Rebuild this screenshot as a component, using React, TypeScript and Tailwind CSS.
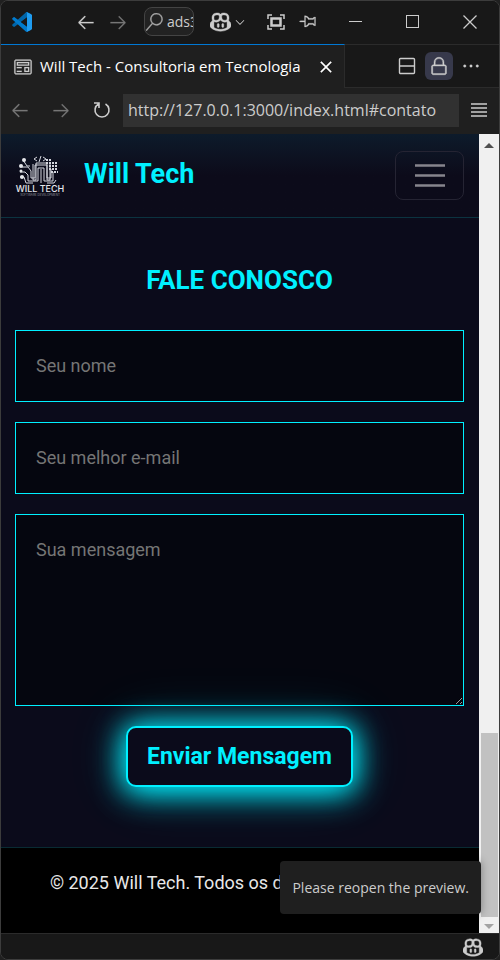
import type { ReactNode } from "react";
import {
  VscArrowLeft,
  VscArrowRight,
  VscChevronDown,
  VscClose,
  VscCopilot,
  VscEllipsis,
  VscLock,
  VscPinned,
  VscPreview,
  VscSearch,
} from "react-icons/vsc";

function IconButton({ label, className = "", children }: { label: string; className?: string; children: ReactNode }) {
  return (
    <button type="button" aria-label={label} className={`flex shrink-0 items-center justify-center ${className}`}>
      {children}
    </button>
  );
}

function VsCodeLogo() {
  return (
    <svg viewBox="0 0 100 100" className="size-5 shrink-0" aria-hidden="true">
      <path d="M96 11 76 1c-3-1-5-1-7 1L2 63c-2 2-2 4 0 6l6 5c1 1 3 1 5 0L94 13c2-2 2-2 2-2Z" fill="#0065a9" />
      <path d="M96 89 76 99c-3 1-5 1-7-1L2 37c-2-2-2-4 0-6l6-5c1-1 3-1 5 0l81 61c2 2 2 2 2 2Z" fill="#007acc" />
      <path d="M76 99c-3 1-5 1-7-1 3 3 6 1 6-2V4c0-3-3-5-6-2 2-2 4-2 7-1l20 10c3 1 4 3 4 5v68c0 2-1 4-4 5Z" fill="#1f9cf0" />
      <path d="M75 27v46L45 50Z" fill="#181818" />
    </svg>
  );
}

function TitleBar() {
  return (
    <header className="flex h-[43px] shrink-0 items-center bg-[#181818] pb-[2px] pl-[11px] pr-[22px] text-[#cccccc]">
      <VsCodeLogo />
      <IconButton label="Voltar" className="ml-[44px]"><VscArrowLeft size={20} strokeWidth={0.2} /></IconButton>
      <IconButton label="Avançar" className="ml-3 text-[#777777]"><VscArrowRight size={20} strokeWidth={0.2} /></IconButton>
      <button type="button" className="ml-4 flex h-[29px] w-[50px] shrink-0 items-center gap-1 overflow-hidden rounded-lg border border-[#444444] bg-[#222222] text-[#a8a8a8]">
        <VscSearch size={18} strokeWidth={0.4} className="shrink-0" />
        <span className="text-sm text-[#cccccc]">ads3</span>
      </button>
      <IconButton label="Copilot" className="ml-4"><VscCopilot size={21} strokeWidth={0.3} /></IconButton>
      <IconButton label="Menu do Copilot" className="ml-[2px]"><VscChevronDown size={14} /></IconButton>
      <div className="ml-[19px] flex flex-1 items-center">
        <IconButton label="Tela compacta">
          <svg width="20" height="20" fill="none" stroke="currentColor" strokeWidth="1.500">
            <path d="M2 7V3h4M14 3h4v4M18 13v4h-4M6 17H2v-4" />
            <rect x="5.500" y="6.500" width="9" height="7" strokeWidth="2.500" />
          </svg>
        </IconButton>
        <IconButton label="Fixar janela" className="ml-3"><VscPinned size={20} strokeWidth={0.2} className="rotate-90" /></IconButton>
      </div>
      <div className="flex items-center gap-[43px]">
        <IconButton label="Minimizar">
          <svg width="14" height="14" stroke="currentColor" fill="none"><path d="M0 6.5h13" /></svg>
        </IconButton>
        <IconButton label="Maximizar">
          <svg width="14" height="14" stroke="currentColor" fill="none"><rect x=".5" y=".5" width="12" height="12" /></svg>
        </IconButton>
        <IconButton label="Fechar">
          <svg width="14" height="14" stroke="currentColor" strokeWidth="1.300" fill="none"><path d="m.5.5 13 13M13.500.5l-13 13" /></svg>
        </IconButton>
      </div>
    </header>
  );
}

function TabBar() {
  return (
    <div className="flex h-11 shrink-0 border-t border-[#2b2b2b] bg-[#181818] text-[#cccccc]">
      <div className="-mt-px flex items-center border-r border-t border-r-[#2b2b2b] border-t-[#0078d4] bg-[#1f1f1f] pl-3 pr-2">
        <VscPreview size={20} strokeWidth={0.1} className="shrink-0" />
        <span className="ml-[7px] whitespace-nowrap text-[15px] text-white">Will Tech - Consultoria em Tecnologia</span>
        <IconButton label="Fechar aba" className="ml-[15px] text-white"><VscClose size={20} strokeWidth={0.4} /></IconButton>
      </div>
      <div className="flex flex-1 items-center justify-end gap-2 border-b border-[#2b2b2b] pr-[18px]">
        <IconButton label="Dividir editor">
          <svg width="20" height="20" fill="none" stroke="currentColor" strokeWidth="1.400">
            <rect x="2.500" y="2.500" width="15" height="15" rx="1" /><path d="M2 10h16" />
          </svg>
        </IconButton>
        <IconButton label="Bloquear grupo" className="size-7 rounded-md bg-[#37394b]"><VscLock size={20} strokeWidth={0.3} /></IconButton>
        <IconButton label="Mais ações"><VscEllipsis size={20} strokeWidth={0.3} /></IconButton>
      </div>
    </div>
  );
}

function AddressBar() {
  return (
    <div className="flex h-[46px] shrink-0 items-center bg-[#1f1f1f] pb-[2px] pl-[9px] pr-3 text-[#cccccc]">
      <IconButton label="Página anterior" className="text-[#777777]"><VscArrowLeft size={20} strokeWidth={0.2} /></IconButton>
      <IconButton label="Próxima página" className="ml-[21px] text-[#777777]"><VscArrowRight size={20} strokeWidth={0.2} /></IconButton>
      <IconButton label="Recarregar" className="ml-[22px]">
        <svg width="18" height="18" viewBox="0 0 18 18" fill="none" stroke="currentColor" strokeWidth="1.600">
          <path d="M12.500 3A7 7 0 1 1 5.500 3M1 2h5v5" />
        </svg>
      </IconButton>
      <input
        aria-label="Endereço"
        defaultValue="http://127.0.0.1:3000/index.html#contato"
        className="ml-3 h-[33px] min-w-0 flex-1 bg-[#313131] px-[5px] text-base text-[#cccccc] outline-none"
      />
      <IconButton label="Menu" className="ml-3">
        <svg width="16" height="14" stroke="currentColor" strokeWidth="1.500"><path d="M0 1h16M0 5h16M0 9h16M0 13h16" /></svg>
      </IconButton>
    </div>
  );
}

function WillTechLogo() {
  return (
    <svg viewBox="0 0 50 50" className="size-[50px] shrink-0" aria-label="Will Tech" role="img">
      <g fill="none" stroke="#d5d7df" strokeWidth="1">
        <path d="M7 16h6l3 4v7h4V14h12v13h4v-9" />
        <path d="M5 21h5l3 3v6h10V17h6v13h9v-9" />
        <path d="M5 26h4l2 6h7M15 15h-3l-4-6M32 32h7l2-3" />
        <path d="M18 13v16h3V12h11v17h3V13M26 18v14" />
        <path d="m22 6-3 2 3 2M28 6l3 2-3 2M26 5l-2 6" />
      </g>
      <g fill="none" stroke="#d5d7df" strokeWidth="2" strokeDasharray="2 1">
        <path d="M31 9h6M31 12h12M34 15h9M34 18h9M36 21h7" />
      </g>
      <g fill="#e5e7eb">
        <circle cx="9" cy="9" r="2" /><circle cx="6" cy="15" r="2" />
        <circle cx="6" cy="20" r="1.500" /><circle cx="7" cy="26" r="2" />
      </g>
      <text x="25" y="41" textAnchor="middle" fill="#e5e7eb" fontSize="9" fontWeight="500" fontFamily="Inter, sans-serif">WILL TECH</text>
      <text x="25" y="45" textAnchor="middle" fill="#8d8f99" fontSize="3" fontFamily="Inter, sans-serif">SOFTWARE DEVELOPMENT</text>
    </svg>
  );
}

function SiteHeader() {
  return (
    <header className="flex h-21 shrink-0 items-center border-b border-[#0b3340] bg-linear-to-b from-[#0d1b2b] to-[#0c0b1a] to-50% px-[14px]">
      <WillTechLogo />
      <a href="#inicio" className="ml-[19px] pb-[2px] text-[27px] font-bold text-[#00f0ff]">Will Tech</a>
      <button type="button" aria-label="Abrir menu" className="ml-auto mr-px flex h-[49px] w-[69px] items-center justify-center rounded-lg border border-[#252433]">
        <svg width="30" height="23" stroke="#86858d" strokeWidth="2.400"><path d="M0 1.500h30M0 11.500h30M0 21.500h30" /></svg>
      </button>
    </header>
  );
}

const fieldClass =
  "block w-full border border-[#00f0ff] bg-[#05060f] p-5 text-lg leading-[30px] text-white outline-none placeholder:text-[#757575]";

function ContactSection() {
  return (
    <section id="contato" className="flex-1 bg-[#0b0b1b] pl-[14px] pr-[15px] pt-[42px]">
      <h2 className="text-center text-[26px] font-bold leading-10 text-[#00f0ff]">FALE CONOSCO</h2>
      <form className="mt-[30px] flex flex-col gap-5" onSubmit={(event) => event.preventDefault()}>
        <input aria-label="Seu nome" placeholder="Seu nome" className={fieldClass} />
        <input aria-label="Seu melhor e-mail" type="email" placeholder="Seu melhor e-mail" className={fieldClass} />
        <textarea aria-label="Sua mensagem" placeholder="Sua mensagem" rows={5} className={fieldClass} />
        <button
          type="submit"
          className="self-center rounded-[10px] border-2 border-[#00f0ff] bg-[#0b0b1b] px-[19px] py-3 text-[23px] font-bold leading-[33px] text-[#00f0ff] shadow-[0_0_24px_rgba(0,240,255,0.500),0_4px_32px_2px_#00f0ff,0_0_60px_rgba(0,240,255,0.200)]"
        >
          Enviar Mensagem
        </button>
      </form>
    </section>
  );
}

function Scrollbar() {
  return (
    <div className="flex w-5 shrink-0 flex-col items-center bg-[#f0f0f0]" aria-hidden="true">
      <svg width="10" height="5" className="mt-[9px]"><path d="M0 5 5 0l5 5Z" fill="#505050" /></svg>
      <div className="flex-1" />
      <div className="h-46 w-[17px] bg-[#c1c1c1]" />
      <svg width="10" height="5" className="mb-1 mt-[7px]"><path d="m0 0 5 5 5-5Z" fill="#a3a3a3" /></svg>
    </div>
  );
}

export default function App() {
  return (
    <div className="min-h-screen bg-[#202020] font-['Open_Sans','Noto_Sans',sans-serif]">
      <div className="flex min-h-screen flex-col overflow-hidden rounded-lg border border-[#3c3c3c] bg-[#181818]">
        <TitleBar />
        <TabBar />
        <AddressBar />
        <div className="relative flex flex-1">
          <main className="flex min-w-0 flex-1 flex-col overflow-hidden font-[Roboto,sans-serif]">
            <SiteHeader />
            <ContactSection />
            <footer className="h-[86px] shrink-0 overflow-hidden border-t border-[#092b33] bg-black px-[14px] pt-5 text-center text-lg leading-[30px] text-[#e8e8e8]">
              <p className="whitespace-nowrap">© 2025 Will Tech. Todos os direitos reservados.</p>
            </footer>
          </main>
          <Scrollbar />
          <div role="status" className="absolute bottom-[19px] right-[18px] rounded bg-[#1f1f1f] px-3 py-4 text-sm leading-[21px] text-[#cccccc] shadow-[0_0_8px_rgba(0,0,0,0.360)]">
            Please reopen the preview.
          </div>
        </div>
        <footer className="flex h-[26px] shrink-0 items-center justify-end border-t border-[#2b2b2b] bg-[#181818] pr-4 text-[#cccccc]">
          <IconButton label="Status do Copilot"><VscCopilot size={20} strokeWidth={0.3} /></IconButton>
        </footer>
      </div>
    </div>
  );
}
